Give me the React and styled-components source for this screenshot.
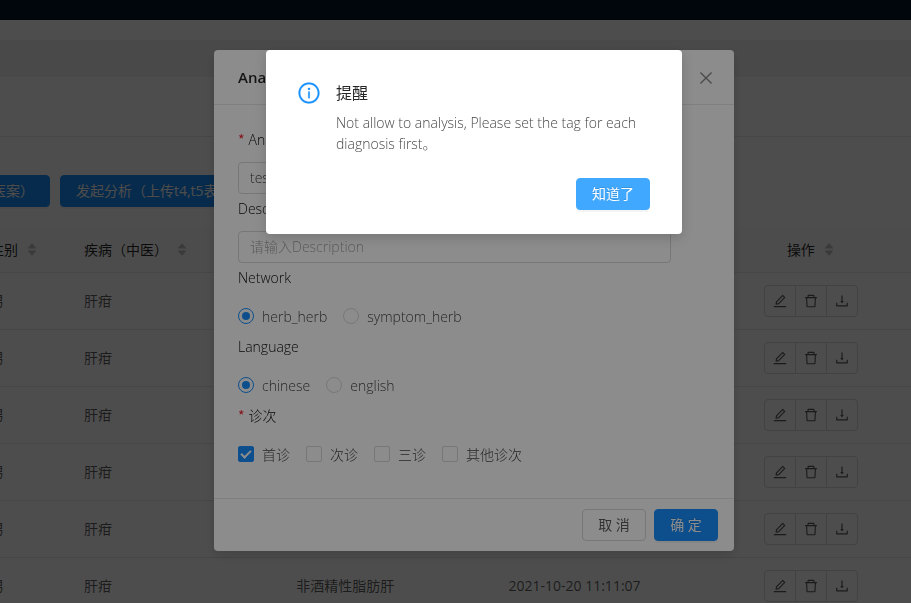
import React from "react";
import styled, { createGlobalStyle, css } from "styled-components";
import {
  AiFillCaretDown,
  AiFillCaretUp,
  AiOutlineClose,
  AiOutlineDelete,
  AiOutlineDownload,
  AiOutlineEdit,
  AiOutlineInfoCircle,
} from "react-icons/ai";

const GlobalStyle = createGlobalStyle`
  *, *::before, *::after { box-sizing: border-box; }
  body {
    margin: 0;
    color: rgba(0, 0, 0, 0.75);
    font: 300 14px/21px "Open Sans", "Noto Sans CJK SC", sans-serif;
  }
  button, input { font: inherit; }
`;

/* ---------- page ---------- */

const Page = styled.div`
  height: 100vh;
  overflow: hidden;
  background: #fff;
`;

const TopBar = styled.header`
  height: 20px;
  background: #001529;
`;

const TabStrip = styled.div`
  height: 20px;
  background: #fff;
`;

const Spacer = styled.div`
  height: 37px;
  background: #f0f2f5;
`;

const FilterPanel = styled.section`
  height: 60px;
  border-bottom: 1px solid #e8e8e8;
`;

const Content = styled.main`
  margin: 0 -6px 0 -26px;
  padding-top: 38px;
`;

const Toolbar = styled.div`
  display: flex;
  gap: 10px;
  margin-bottom: 20px;
  padding-left: 2px;
`;

const Button = styled.button`
  height: 32px;
  min-width: 64px;
  padding: 0 15px;
  border: 1px solid #d9d9d9;
  border-radius: 4px;
  background: #fff;
  color: rgba(0, 0, 0, 0.65);
  font-weight: 400;
  line-height: 30px;
  white-space: nowrap;
  cursor: pointer;
  ${({ $tone }) =>
    $tone &&
    css`
      border-color: ${$tone};
      background: ${$tone};
      color: #fff;
      text-shadow: 0 -1px 0 rgba(0, 0, 0, 0.12);
      box-shadow: 0 2px 0 rgba(0, 0, 0, 0.045);
    `}
`;

const Table = styled.table`
  width: 100%;
  table-layout: fixed;
  border-collapse: separate;
  border-spacing: 0;
`;

const HeadCell = styled.th`
  height: 46px;
  width: ${({ $width }) => $width || "auto"};
  padding: 0 16px;
  border-bottom: 1px solid #e8e8e8;
  background: #fafafa;
  color: rgba(0, 0, 0, 0.85);
  font-weight: 400;
  text-align: ${({ $align }) => $align || "left"};
  white-space: nowrap;
`;

const HeadLabel = styled.span`
  display: inline-flex;
  align-items: center;
  gap: 8px;
`;

const Sorter = styled.span`
  display: inline-flex;
  flex-direction: column;
  color: #bfbfbf;
  font-size: 12px;
  svg { display: block; }
  svg + svg { margin-top: -5px; }
`;

const Cell = styled.td`
  height: 57px;
  padding: 0 16px 2px;
  border-bottom: 1px solid #e8e8e8;
  color: rgba(0, 0, 0, 0.65);
  font-weight: 400;
  white-space: nowrap;
`;

const ActionCell = styled(Cell)`
  padding: 0 16px;
  text-align: center;
`;

const Actions = styled.div`
  display: inline-flex;
  vertical-align: middle;
`;

const ActionButton = styled.button`
  display: grid;
  place-items: center;
  width: 32px;
  height: 32px;
  padding: 0;
  border: 1px solid #d9d9d9;
  background: #fff;
  color: rgba(0, 0, 0, 0.65);
  font-size: 16px;
  cursor: pointer;
  & + & { margin-left: -1px; }
  &:first-child { border-radius: 4px 0 0 4px; }
  &:last-child { border-radius: 0 4px 4px 0; }
`;

/* ---------- dialogs ---------- */

const Mask = styled.div`
  position: fixed;
  inset: 0;
  display: flex;
  justify-content: center;
  align-items: flex-start;
  padding: 50px 0 0 37px;
  background: rgba(0, 0, 0, 0.45);
`;

const Dialog = styled.section`
  width: ${({ $width }) => $width};
  max-width: 100%;
  border-radius: 4px;
  background: #fff;
  box-shadow: 0 4px 12px rgba(0, 0, 0, 0.15);
`;

const DialogHeader = styled.header`
  display: flex;
  align-items: center;
  justify-content: space-between;
  height: 55px;
  padding: 1px 19px 0 24px;
  border-bottom: 1px solid #e8e8e8;
`;

const DialogTitle = styled.h2`
  margin: 0;
  color: rgba(0, 0, 0, 0.85);
  font-size: 15px;
  font-weight: 600;
`;

const CloseButton = styled.button`
  display: grid;
  place-items: center;
  width: 18px;
  height: 18px;
  padding: 0;
  border: 0;
  background: none;
  color: rgba(0, 0, 0, 0.45);
  font-size: 18px;
  cursor: pointer;
`;

const DialogBody = styled.form`
  padding: 24px;
`;

const DialogFooter = styled.footer`
  display: flex;
  justify-content: flex-end;
  gap: 8px;
  padding: 10px 16px;
  border-top: 1px solid #e8e8e8;
`;

const Field = styled.div`
  height: 69px;
`;

const Group = styled.fieldset`
  height: 69px;
  min-width: 0;
  margin: 0;
  padding: 0;
  border: 0;
`;

const labelStyle = css`
  display: block;
  height: 29px;
  padding: 0;
  color: rgba(0, 0, 0, 0.95);
`;

const FieldLabel = styled.label`${labelStyle}`;
const GroupLabel = styled.legend`${labelStyle}`;

const Required = styled.span`
  margin-right: 4px;
  color: #f5222d;
  font-family: "Noto Sans CJK SC", sans-serif;
  font-weight: 400;
`;

const TextInput = styled.input`
  display: block;
  width: calc(100% * 22 / 24);
  height: 32px;
  margin: 4px 0;
  padding: 0 11px 1px;
  border: 1px solid #d9d9d9;
  border-radius: 4px;
  background: #fff;
  color: rgba(0, 0, 0, 0.75);
  &::placeholder { color: #a6a6a6; opacity: 1; }
`;

const Choices = styled.div`
  display: flex;
  align-items: center;
  gap: 16px;
  height: 40px;
`;

const Choice = styled.label`
  display: flex;
  align-items: center;
  gap: 8px;
  white-space: nowrap;
  cursor: pointer;
`;

const Radio = styled.input.attrs({ type: "radio" })`
  appearance: none;
  display: grid;
  place-items: center;
  width: 16px;
  height: 16px;
  margin: 0;
  border: 1px solid #d9d9d9;
  border-radius: 50%;
  background: #fff;
  &:checked { border-color: #1890ff; }
  &:checked::after {
    content: "";
    width: 8px;
    height: 8px;
    border-radius: 50%;
    background: #1890ff;
  }
`;

const Checkbox = styled.input.attrs({ type: "checkbox" })`
  appearance: none;
  display: grid;
  place-items: center;
  width: 16px;
  height: 16px;
  margin: 0;
  border: 1px solid #d9d9d9;
  border-radius: 2px;
  background: #fff;
  &:checked { border-color: #1890ff; background: #1890ff; }
  &:checked::after {
    content: "";
    width: 6px;
    height: 10px;
    margin-bottom: 3px;
    border: solid #fff;
    border-width: 0 2px 2px 0;
    transform: rotate(45deg);
  }
`;

const Notice = styled.div`
  display: grid;
  grid-template-columns: 22px 1fr;
  column-gap: 16px;
  padding: 32px 32px 24px;
`;

const NoticeIcon = styled.span`
  display: grid;
  place-content: center;
  height: 22px;
  color: #1890ff;
  font-size: 24px;
  svg { display: block; stroke-width: 8; }
`;

const NoticeTitle = styled.h2`
  margin: 0 0 8px;
  color: rgba(0, 0, 0, 0.85);
  font-size: 16px;
  font-weight: 400;
  line-height: 22px;
`;

const NoticeText = styled.p`
  margin: 0;
`;

const NoticeActions = styled.div`
  grid-column: 1 / -1;
  display: flex;
  justify-content: flex-end;
  margin-top: 24px;
`;

const rows = [
  { id: 1 },
  { id: 2 },
  { id: 3 },
  { id: 4 },
  { id: 5 },
  { id: 6 },
].map((row) => ({
  ...row,
  sex: "男",
  tcm: "肝疳",
  western: "非酒精性脂肪肝",
  time: "2021-10-20 11:11:07",
}));

function Head({ children, ...rest }) {
  return (
    <HeadCell {...rest}>
      <HeadLabel>
        {children}
        <Sorter>
          <AiFillCaretUp />
          <AiFillCaretDown />
        </Sorter>
      </HeadLabel>
    </HeadCell>
  );
}

function RecordTable() {
  return (
    <Table>
      <thead>
        <tr>
          <Head $width="94px">性别</Head>
          <Head>疾病（中医）</Head>
          <Head>疾病（西医）</Head>
          <Head>创建时间</Head>
          <Head $align="center">操作</Head>
        </tr>
      </thead>
      <tbody>
        {rows.map((row) => (
          <tr key={row.id}>
            <Cell>{row.sex}</Cell>
            <Cell>{row.tcm}</Cell>
            <Cell>{row.western}</Cell>
            <Cell>{row.time}</Cell>
            <ActionCell>
              <Actions>
                <ActionButton aria-label="编辑"><AiOutlineEdit /></ActionButton>
                <ActionButton aria-label="删除"><AiOutlineDelete /></ActionButton>
                <ActionButton aria-label="下载"><AiOutlineDownload /></ActionButton>
              </Actions>
            </ActionCell>
          </tr>
        ))}
      </tbody>
    </Table>
  );
}

function AnalysisDialog() {
  return (
    <Mask>
      <Dialog $width="520px" role="dialog" aria-labelledby="analysis-title">
        <DialogHeader>
          <DialogTitle id="analysis-title">Analysis</DialogTitle>
          <CloseButton aria-label="关闭"><AiOutlineClose /></CloseButton>
        </DialogHeader>
        <DialogBody>
          <Field>
            <FieldLabel htmlFor="name"><Required>*</Required>Analysis</FieldLabel>
            <TextInput id="name" defaultValue="test" />
          </Field>
          <Field>
            <FieldLabel htmlFor="description">Description</FieldLabel>
            <TextInput id="description" placeholder="请输入Description" />
          </Field>
          <Group>
            <GroupLabel>Network</GroupLabel>
            <Choices>
              <Choice><Radio name="network" defaultChecked />herb_herb</Choice>
              <Choice><Radio name="network" />symptom_herb</Choice>
            </Choices>
          </Group>
          <Group>
            <GroupLabel>Language</GroupLabel>
            <Choices>
              <Choice><Radio name="language" defaultChecked />chinese</Choice>
              <Choice><Radio name="language" />english</Choice>
            </Choices>
          </Group>
          <Group>
            <GroupLabel><Required>*</Required>诊次</GroupLabel>
            <Choices>
              <Choice><Checkbox defaultChecked />首诊</Choice>
              <Choice><Checkbox />次诊</Choice>
              <Choice><Checkbox />三诊</Choice>
              <Choice><Checkbox />其他诊次</Choice>
            </Choices>
          </Group>
        </DialogBody>
        <DialogFooter>
          <Button>取 消</Button>
          <Button $tone="#1890ff">确 定</Button>
        </DialogFooter>
      </Dialog>
    </Mask>
  );
}

function NoticeDialog() {
  return (
    <Mask>
      <Dialog $width="416px" role="alertdialog" aria-labelledby="notice-title">
        <Notice>
          <NoticeIcon><AiOutlineInfoCircle /></NoticeIcon>
          <div>
            <NoticeTitle id="notice-title">提醒</NoticeTitle>
            <NoticeText>
              Not allow to analysis, Please set the tag for each diagnosis first。
            </NoticeText>
          </div>
          <NoticeActions>
            <Button $tone="#40a9ff">知道了</Button>
          </NoticeActions>
        </Notice>
      </Dialog>
    </Mask>
  );
}

export default function App() {
  return (
    <>
      <GlobalStyle />
      <Page>
        <TopBar />
        <TabStrip />
        <Spacer />
        <FilterPanel />
        <Content>
          <Toolbar>
            <Button $tone="#1890ff">医案）</Button>
            <Button $tone="#1890ff">发起分析（上传t4,t5表）</Button>
          </Toolbar>
          <RecordTable />
        </Content>
      </Page>
      <AnalysisDialog />
      <NoticeDialog />
    </>
  );
}
